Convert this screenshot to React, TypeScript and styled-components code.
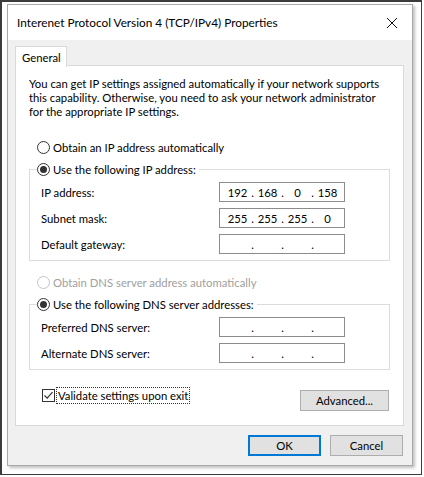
import styled, { createGlobalStyle } from "styled-components";

const GlobalStyle = createGlobalStyle`
  html, body {
    margin: 0;
    padding: 0;
    background: #ffffff;
  }
  body {
    font-family: Lato, "Open Sans", sans-serif;
    font-size: 11.3px;
    color: #000;
  }
`;

const Frame = styled.div`
  width: 422px;
  height: 475px;
  border: 2px solid #3c3c3c;
  border-right-width: 1px;
  border-bottom-width: 1px;
  box-sizing: border-box;
  background: #fff;
  padding: 2px 0 0 5px;
`;

const Window = styled.div`
  width: 406px;
  height: 462px;
  box-sizing: border-box;
  border: 1px solid #a9a9a9;
  box-shadow: 2px 2px 3px rgba(0, 0, 0, 0.25);
  display: flex;
  flex-direction: column;
  background: #f0f0f0;
`;

const TitleBar = styled.div`
  height: 35px;
  background: #fff;
  display: flex;
  align-items: center;
  justify-content: space-between;
  padding: 0 14px 0 9px;
  font-size: 11.8px;
`;

const CloseButton = styled.div`
  width: 12px;
  height: 12px;
  display: flex;
`;

const Body = styled.div`
  flex: 1;
  display: flex;
  flex-direction: column;
  padding: 6px 8px 0 7px;
`;

const TabStrip = styled.div`
  display: flex;
  height: 20px;
  margin-bottom: -1px;
  position: relative;
  z-index: 1;
`;

const Tab = styled.div`
  width: 52px;
  background: #fff;
  border: 1px solid #d9d9d9;
  border-bottom: none;
  box-sizing: border-box;
  display: flex;
  align-items: center;
  padding-left: 6px;
  height: 21px;
`;

const Panel = styled.div`
  height: 361px;
  box-sizing: border-box;
  background: #fff;
  border: 1px solid #d9d9d9;
  padding: 11px 13px 0 13px;
  display: flex;
  flex-direction: column;
`;

const Intro = styled.p`
  margin: 0;
  line-height: 14px;
  white-space: nowrap;
`;

const OptionRow = styled.label<{ $disabled?: boolean; $indent?: number }>`
  display: flex;
  align-items: center;
  height: 16px;
  gap: 3px;
  margin-left: ${(p) => p.$indent ?? 8}px;
  color: ${(p) => (p.$disabled ? "#a0a0a0" : "#000")};
`;

const Radio = styled.span<{ $checked?: boolean; $disabled?: boolean }>`
  width: 13px;
  height: 13px;
  box-sizing: border-box;
  border-radius: 50%;
  border: 1px solid ${(p) => (p.$disabled ? "#c4c4c4" : "#333")};
  display: flex;
  align-items: center;
  justify-content: center;
  background: #fff;
  &::after {
    content: "";
    width: 7px;
    height: 7px;
    border-radius: 50%;
    background: #333;
    display: ${(p) => (p.$checked ? "block" : "none")};
  }
`;

const Group = styled.fieldset<{ $top: number }>`
  margin: ${(p) => p.$top}px 0 0 0;
  padding: 5px 44px 6px 11px;
  border: 1px solid #dcdcdc;
  min-width: 0;
  display: flex;
  flex-direction: column;
  gap: 6px;
`;

const Legend = styled.legend`
  padding: 0 3px 0 0;
  margin-left: -4px;
  height: 16px;
  display: flex;
`;

const FieldRow = styled.div`
  display: flex;
  align-items: center;
  justify-content: space-between;
  height: 20px;
`;

const IpBox = styled.div`
  width: 126px;
  height: 20px;
  box-sizing: border-box;
  border: 1px solid #8c8c8c;
  background: #fff;
  display: flex;
  align-items: center;
  padding-left: 6px;
`;

const Octet = styled.span`
  width: 23px;
  text-align: center;
`;

const Dot = styled.span`
  width: 7px;
  text-align: center;
`;

const BottomRow = styled.div`
  display: flex;
  justify-content: space-between;
  align-items: flex-start;
  margin-top: 17px;
  padding-right: 1px;
`;

const CheckRow = styled.label`
  display: flex;
  align-items: center;
  height: 16px;
  gap: 2px;
  margin-left: 13px;
`;

const CheckBox = styled.span`
  width: 13px;
  height: 13px;
  box-sizing: border-box;
  border: 1px solid #333;
  background: #fff;
  display: flex;
`;

const FocusText = styled.span`
  outline: 1px dotted #333;
  outline-offset: 0;
  line-height: 15px;
  padding: 0 1px;
`;

const Button = styled.div<{ $default?: boolean; $width: number }>`
  width: ${(p) => p.$width}px;
  height: 21px;
  box-sizing: border-box;
  background: #e1e1e1;
  border: 1px solid ${(p) => (p.$default ? "#0078d7" : "#adadad")};
  box-shadow: ${(p) => (p.$default ? "inset 0 0 0 1px #0078d7" : "none")};
  display: flex;
  align-items: center;
  justify-content: center;
`;

const AdvancedButton = styled(Button)`
  margin-top: 3px;
`;

const Footer = styled.div`
  display: flex;
  justify-content: flex-end;
  gap: 9px;
  padding: 9px 1px 0 0;
`;

const IpField = ({ value }: { value?: string[] }) => {
  const parts = value ?? ["", "", "", ""];
  return (
    <IpBox>
      {parts.map((part, i) => (
        <span key={i} style={{ display: "contents" }}>
          <Octet>{part}</Octet>
          {i < 3 && <Dot>.</Dot>}
        </span>
      ))}
    </IpBox>
  );
};

const App = () => {
  return (
    <>
      <GlobalStyle />
      <Frame>
        <Window>
          <TitleBar>
            <span>Interenet Protocol Version 4 (TCP/IPv4) Properties</span>
            <CloseButton>
              <svg width="12" height="12" viewBox="0 0 12 12">
                <path d="M1 1L11 11M11 1L1 11" stroke="#111" strokeWidth="1" />
              </svg>
            </CloseButton>
          </TitleBar>
          <Body>
            <TabStrip>
              <Tab>General</Tab>
            </TabStrip>
            <Panel>
              <Intro>
                You can get IP settings assigned automatically if your network supports
                <br />
                this capability. Otherwise, you need to ask your network administrator
                <br />
                for the appropriate IP settings.
              </Intro>

              <OptionRow style={{ marginTop: 20 }}>
                <Radio />
                Obtain an IP address automatically
              </OptionRow>

              <Group $top={6}>
                <Legend>
                  <OptionRow $indent={0}>
                    <Radio $checked />
                    Use the following IP address:
                  </OptionRow>
                </Legend>
                <FieldRow>
                  <span>IP address:</span>
                  <IpField value={["192", "168", "0", "158"]} />
                </FieldRow>
                <FieldRow>
                  <span>Subnet mask:</span>
                  <IpField value={["255", "255", "255", "0"]} />
                </FieldRow>
                <FieldRow>
                  <span>Default gateway:</span>
                  <IpField />
                </FieldRow>
              </Group>

              <OptionRow $disabled style={{ marginTop: 13 }}>
                <Radio $disabled />
                Obtain DNS server address automatically
              </OptionRow>

              <Group $top={6}>
                <Legend>
                  <OptionRow $indent={0}>
                    <Radio $checked />
                    Use the following DNS server addresses:
                  </OptionRow>
                </Legend>
                <FieldRow>
                  <span>Preferred DNS server:</span>
                  <IpField />
                </FieldRow>
                <FieldRow>
                  <span>Alternate DNS server:</span>
                  <IpField />
                </FieldRow>
              </Group>

              <BottomRow>
                <CheckRow>
                  <CheckBox>
                    <svg width="11" height="11" viewBox="0 0 11 11">
                      <path d="M1.5 5.5L4.2 8.2L9.5 2.2" fill="none" stroke="#333" strokeWidth="1.2" />
                    </svg>
                  </CheckBox>
                  <FocusText>Validate settings upon exit</FocusText>
                </CheckRow>
                <AdvancedButton $width={89}>Advanced...</AdvancedButton>
              </BottomRow>
            </Panel>
            <Footer>
              <Button $default $width={73}>OK</Button>
              <Button $width={73}>Cancel</Button>
            </Footer>
          </Body>
        </Window>
      </Frame>
    </>
  );
};

export default App;
